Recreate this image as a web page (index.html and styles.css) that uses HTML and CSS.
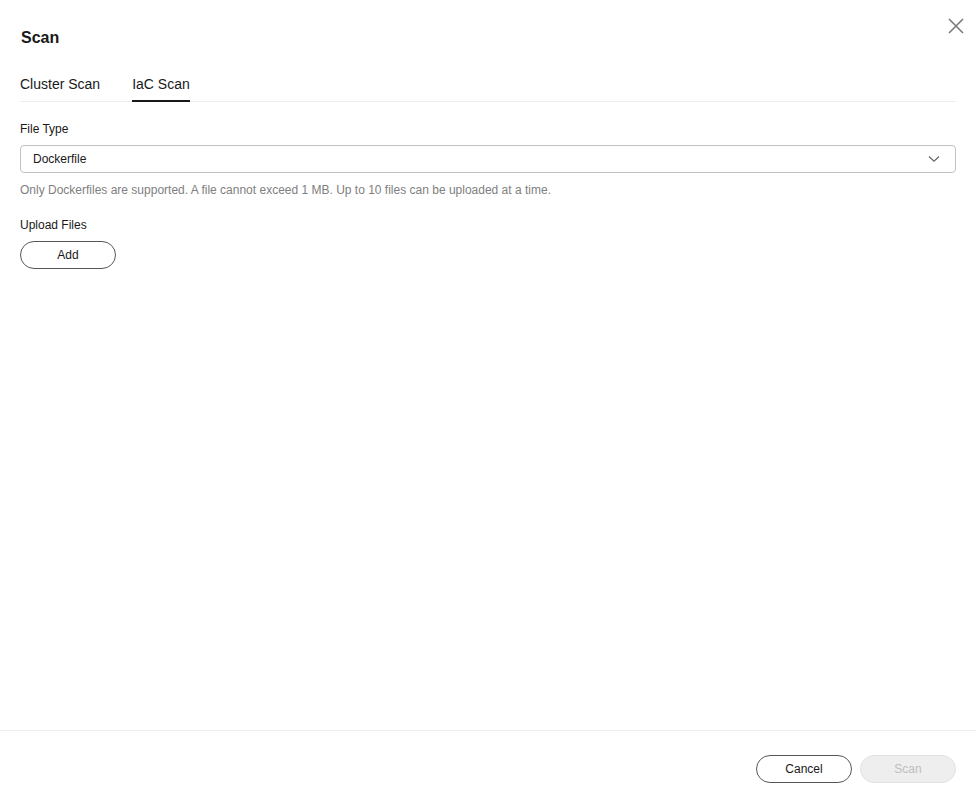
FILE: index.html
```html
<!DOCTYPE html>
<html>
<head>
<meta charset="utf-8">
<link rel="stylesheet" href="styles.css">
</head>
<body>
<div class="dialog">
  <div class="header">
    <h1 class="title">Scan</h1>
    <button class="close" aria-label="Close">
      <svg width="16" height="16" viewBox="0 0 16 16"><path d="M1 1L15 15M15 1L1 15" stroke="#7a7a7a" stroke-width="1.6" fill="none"/></svg>
    </button>
  </div>
  <div class="body">
    <div class="tabs">
      <div class="tab">Cluster Scan</div>
      <div class="tab active">IaC Scan</div>
    </div>
    <div class="field">
      <div class="label">File Type</div>
      <div class="select">
        <span>Dockerfile</span>
        <svg width="12" height="8" viewBox="0 0 12 8"><path d="M1 1.5L6 6.2L11 1.5" stroke="#666" stroke-width="1.2" fill="none"/></svg>
      </div>
      <div class="help">Only Dockerfiles are supported. A file cannot exceed 1 MB. Up to 10 files can be uploaded at a time.</div>
    </div>
    <div class="field">
      <div class="label">Upload Files</div>
      <button class="btn">Add</button>
    </div>
  </div>
  <div class="footer">
    <button class="btn">Cancel</button>
    <button class="btn disabled">Scan</button>
  </div>
</div>
</body>
</html>
```
FILE: styles.css
```css
* { box-sizing: border-box; }
html, body { margin: 0; padding: 0; height: 100%; }
body {
  font-family: "Liberation Sans", Arial, sans-serif;
  color: #191919;
  background: #fff;
}
.dialog {
  height: 807px;
  display: flex;
  flex-direction: column;
}
.header {
  display: flex;
  justify-content: space-between;
  align-items: flex-start;
  padding: 18px 12px 0 20px;
}
.title {
  margin: 11px 0 0 1px;
  font-size: 16px;
  font-weight: bold;
  line-height: 18px;
}
.close {
  border: none;
  background: none;
  padding: 0;
  width: 16px;
  height: 16px;
  cursor: pointer;
}
.body {
  flex: 1;
  padding: 0 20px;
}
.tabs {
  display: flex;
  gap: 32px;
  border-bottom: 1px solid #ececec;
  margin-top: 28px;
}
.tab {
  font-size: 14px;
  line-height: 16px;
  padding: 1px 0 8px;
  border-bottom: 2px solid transparent;
  margin-bottom: -1px;
  color: #191919;
}
.tab.active {
  border-bottom-color: #191919;
}
.field { margin-top: 20px; }
.field + .field { margin-top: 21px; }
.label {
  font-size: 12px;
  line-height: 14px;
  margin-bottom: 9px;
}
.select {
  height: 28px;
  border: 1px solid #c2c2c2;
  border-radius: 4px;
  display: flex;
  align-items: center;
  justify-content: space-between;
  padding: 0 15px 0 12px;
  font-size: 12px;
}
.help {
  font-size: 12px;
  line-height: 14px;
  color: #808080;
  margin-top: 10px;
}
.btn {
  width: 96px;
  height: 28px;
  border: 1px solid #575757;
  border-radius: 14px;
  background: #fff;
  font-family: "Liberation Sans", Arial, sans-serif;
  font-size: 12px;
  color: #191919;
  padding: 0;
}
.btn.disabled {
  background: #eeeeee;
  border-color: #e2e2e2;
  color: #bebebe;
}
.footer {
  border-top: 1px solid #ececec;
  display: flex;
  justify-content: flex-end;
  gap: 8px;
  padding: 24px 20px 24px;
}
```
